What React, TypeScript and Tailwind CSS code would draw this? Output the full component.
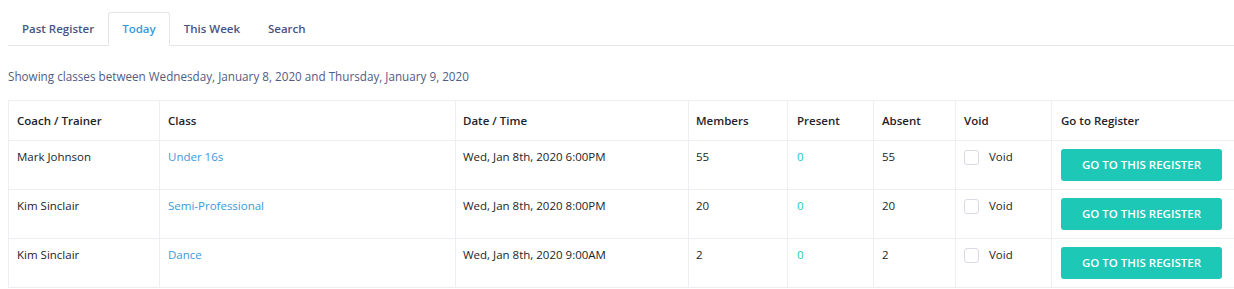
import { useState } from 'react';

type Row = {
  coach: string;
  cls: string;
  date: string;
  members: number;
  present: number;
  absent: number;
};

const rows: Row[] = [
  { coach: 'Mark Johnson', cls: 'Under 16s', date: 'Wed, Jan 8th, 2020 6:00PM', members: 55, present: 0, absent: 55 },
  { coach: 'Kim Sinclair', cls: 'Semi-Professional', date: 'Wed, Jan 8th, 2020 8:00PM', members: 20, present: 0, absent: 20 },
  { coach: 'Kim Sinclair', cls: 'Dance', date: 'Wed, Jan 8th, 2020 9:00AM', members: 2, present: 0, absent: 2 },
];

const tabs = ['Past Register', 'Today', 'This Week', 'Search'];

// per-column left padding, matched to the screenshot
const pads = ['px-[8px]', 'px-[8px]', 'px-[7px]', 'px-[7px]', 'px-[9px]', 'px-[8px]', 'px-[8px]', 'px-[9px]'];

export default function App() {
  const [activeTab, setActiveTab] = useState('Today');

  return (
    <main className="w-[1234px] h-[289px] overflow-hidden bg-white font-['Open_Sans',sans-serif] text-[#212529]">
      <div className="pl-2 pt-3">
        {/* Tabs */}
        <div className="flex border-b border-[#e4e6ea] w-[1240px]">
          {tabs.map((t) => (
            <button
              key={t}
              onClick={() => setActiveTab(t)}
              className={`h-[34px] -mb-px px-[13px] text-[11.5px] font-semibold rounded-t-[3px] border ${activeTab === t ? 'border-[#e4e6ea] border-b-white bg-white text-[#3a9ad9]' : 'border-transparent text-[#4a5381]'}`}
            >
              {t}
            </button>
          ))}
        </div>

        <p className="mt-[21px] text-[11.7px] text-[#525c84] leading-[18px]">
          Showing classes between Wednesday, January 8, 2020 and Thursday, January 9, 2020
        </p>

        <table className="mt-[15px] table-fixed border-collapse w-[1240px] text-[11.5px]">
          <colgroup>
            <col className="w-[151px]" />
            <col className="w-[296px]" />
            <col className="w-[233px]" />
            <col className="w-[99px]" />
            <col className="w-[86px]" />
            <col className="w-[82px]" />
            <col className="w-[96px]" />
            <col />
          </colgroup>
          <thead>
            <tr className="h-[40px]">
              {['Coach / Trainer', 'Class', 'Date / Time', 'Members', 'Present', 'Absent', 'Void', 'Go to Register'].map((h, i) => (
                <th key={h} className={`border border-[#eceef2] ${pads[i]} text-left font-semibold text-[#1f2229] align-middle`}>
                  {h}
                </th>
              ))}
            </tr>
          </thead>
          <tbody>
            {rows.map((r, i) => (
              <tr key={i} className="h-[49px]">
                <td className={`border border-[#eceef2] ${pads[0]} pt-[7px] align-top leading-[18px]`}>{r.coach}</td>
                <td className={`border border-[#eceef2] ${pads[1]} pt-[7px] align-top leading-[18px] text-[#3a9ad9]`}>{r.cls}</td>
                <td className={`border border-[#eceef2] ${pads[2]} pt-[7px] align-top leading-[18px]`}>{r.date}</td>
                <td className={`border border-[#eceef2] ${pads[3]} pt-[7px] align-top leading-[18px]`}>{r.members}</td>
                <td className={`border border-[#eceef2] ${pads[4]} pt-[7px] align-top leading-[18px] text-[#1ec8b6]`}>{r.present}</td>
                <td className={`border border-[#eceef2] ${pads[5]} pt-[7px] align-top leading-[18px]`}>{r.absent}</td>
                <td className={`border border-[#eceef2] ${pads[6]} pt-[7px] align-top leading-[18px]`}>
                  <label className="flex items-center gap-[10px]">
                    <span className="w-[15px] h-[15px] rounded-[3px] border border-[#d8dbe3] bg-white" />
                    <span>Void</span>
                  </label>
                </td>
                <td className={`border border-[#eceef2] ${pads[7]} py-[8px] align-top`}>
                  <button className="w-[161px] h-[32px] rounded-[3px] bg-[#1ec8b6] text-white text-[11.5px] font-semibold uppercase">
                    Go to this register
                  </button>
                </td>
              </tr>
            ))}
          </tbody>
        </table>
      </div>
    </main>
  );
}
